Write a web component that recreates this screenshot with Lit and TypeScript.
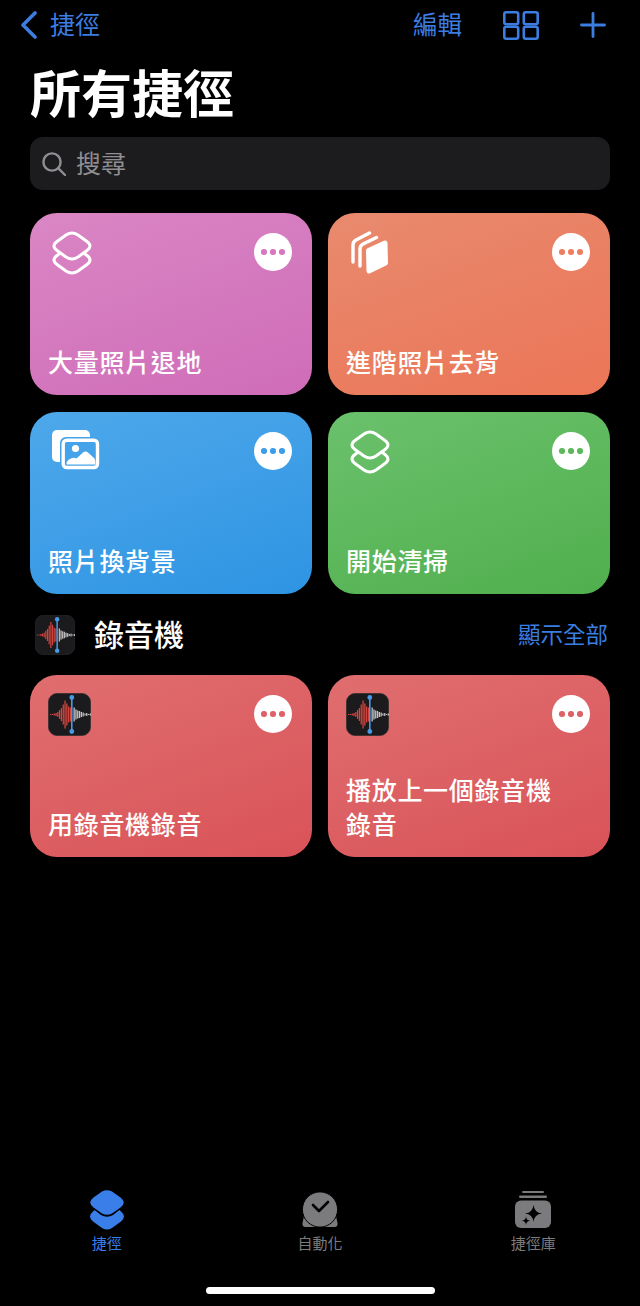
import { LitElement, html, svg, css, unsafeCSS } from 'lit';
import { customElement, property } from 'lit/decorators.js';

const FONT = unsafeCSS(`"Noto Sans CJK TC", "Noto Sans", sans-serif`);

// voice memo waveform, bar heights left to right
const RED_BARS = [1, 1, 2, 3, 5, 9, 13, 20, 28, 22, 16, 14];
const GREY_BARS = [14, 10, 8, 7, 5, 4, 2, 3, 1, 2];

const layersIcon = svg`
  <svg width="40" height="44" viewBox="0 0 40 44" fill="none" stroke="#fff" stroke-width="3" stroke-linejoin="round" stroke-linecap="round">
    <path d="M14 4Q20 0 26 4L35 10.5Q41 15 35 19.5L26 26Q20 30 14 26L5 19.5Q-1 15 5 10.5Z" />
    <path d="M7 23L5 24.5Q-1 29 5 33.5L14 40Q20 44 26 40L35 33.5Q41 29 35 24.5L33 23" />
  </svg>`;

const stackIcon = svg`
  <svg width="40" height="44" viewBox="0 0 40 44" fill="none" stroke="#fff" stroke-linecap="round" stroke-linejoin="round">
    <path d="M18.5 19.5L35 12L35.5 32L19 40Z" fill="#fff" stroke-width="5" />
    <path d="M26.5 6.5L13 13Q10 14.5 10 18V35" stroke-width="3.4" />
    <path d="M19.5 2L6 9Q3 10.5 3 14V31" stroke-width="3.4" />
  </svg>`;

const photosIcon = svg`
  <svg width="48" height="40" viewBox="0 0 48 40">
    <rect x="0" y="0" width="38" height="32" rx="5" fill="#fff" />
    <rect x="8" y="7" width="41" height="34" rx="6" fill="#45a3e9" />
    <rect x="11.2" y="10.2" width="34.3" height="27.3" rx="3.5" fill="#45a3e9" stroke="#fff" stroke-width="3.4" />
    <circle cx="23.5" cy="18.5" r="3.6" fill="#fff" />
    <path d="M14.5 34.5Q14 31 18 29Q22 27 24.5 28.5L31 22.5Q33.5 20.5 36 22.5L42.5 28.5Q43.5 30 43.5 34.5Z" fill="#fff" />
  </svg>`;

const voiceIcon = svg`
  <svg class="voice" viewBox="0 0 43 43">
    <rect x=".25" y=".25" width="42.5" height="42.5" rx="9" fill="#1b1b1e" stroke="#38383a" stroke-width=".5" />
    ${RED_BARS.map((h, i) => svg`<rect x=${2 + i * 1.8} y=${21.5 - h / 2} width="1.3" height=${h} fill="#d0453e" />`)}
    ${GREY_BARS.map((h, i) => svg`<rect x=${25.5 + i * 1.8} y=${21.5 - h / 2} width="1.3" height=${h} fill="#c4c4c4" />`)}
    <rect x="23" y="4" width="1.6" height="35" fill="#4a98e8" />
    <circle cx="23.8" cy="4.5" r="2.4" fill="#4a98e8" />
    <circle cx="23.8" cy="38.5" r="2.4" fill="#4a98e8" />
  </svg>`;

const ICONS = { layers: layersIcon, stack: stackIcon, photos: photosIcon, voice: voiceIcon };

@customElement('shortcut-card')
export class ShortcutCard extends LitElement {
  static styles = css`
    :host {
      display: block;
    }
    .card {
      height: 182px;
      box-sizing: border-box;
      padding: 18px 20px 17px 18px;
      border-radius: 27px;
      display: flex;
      flex-direction: column;
      justify-content: space-between;
      font-family: ${FONT};
    }
    .pink { --dot: #d877bf; background: linear-gradient(160deg, #da86c4, #cf6cb9); }
    .orange { --dot: #ec7f62; background: linear-gradient(160deg, #e88a6e, #ec7557); }
    .blue { --dot: #3e9de7; background: linear-gradient(160deg, #4ea8ea, #2e94e3); }
    .green { --dot: #5cb85b; background: linear-gradient(160deg, #6bc16c, #50af4d); }
    .red { --dot: #dd6166; background: linear-gradient(160deg, #e06e6f, #d95358); }
    .top {
      display: flex;
      justify-content: space-between;
      align-items: flex-start;
    }
    .icon {
      display: flex;
      margin-left: 4px;
    }
    .icon.voice-slot {
      margin-left: 0;
    }
    .voice {
      width: 43px;
      height: 43px;
      display: block;
    }
    .more {
      width: 38px;
      height: 38px;
      margin-top: 2px;
      border-radius: 50%;
      background: #fff;
      display: flex;
      align-items: center;
      justify-content: center;
      gap: 3.5px;
    }
    .more i {
      width: 5.5px;
      height: 5.5px;
      border-radius: 50%;
      background: var(--dot);
    }
    .label {
      max-width: 225px;
      color: #fff;
      font-size: 25px;
      font-weight: 500;
      line-height: 33.5px;
      letter-spacing: 0.7px;
    }
  `;

  @property() label = '';
  @property() tone = 'pink';
  @property() icon = 'layers';

  render() {
    return html`
      <div class="card ${this.tone}">
        <div class="top">
          <div class="icon ${this.icon === 'voice' ? 'voice-slot' : ''}">${ICONS[this.icon]}</div>
          <div class="more"><i></i><i></i><i></i></div>
        </div>
        <div class="label">${this.label}</div>
      </div>
    `;
  }
}

@customElement('app-root')
export class AppRoot extends LitElement {
  static styles = css`
    :host {
      display: flex;
      flex-direction: column;
      min-height: 1306px;
      background: #000;
      color: #fff;
      font-family: ${FONT};
    }
    .nav {
      height: 50px;
      padding: 0 34px 0 20px;
      display: flex;
      align-items: center;
      color: #3b7de0;
    }
    .back {
      display: flex;
      align-items: center;
      gap: 13px;
      font-size: 25px;
      line-height: 34px;
    }
    .back span {
      margin-bottom: 4px;
    }
    .actions {
      margin-left: auto;
      display: flex;
      align-items: center;
    }
    .edit {
      font-size: 24.5px;
      line-height: 34px;
      margin: 0 41px 2px 0;
    }
    .grid-btn {
      margin-right: 41px;
    }
    svg {
      display: block;
    }
    main {
      flex: 1;
      padding: 11px 30px 0;
    }
    h1 {
      margin: 0;
      font-size: 51px;
      font-weight: 700;
      line-height: 60px;
    }
    .search {
      margin-top: 16px;
      height: 53px;
      padding-left: 12px;
      border-radius: 13px;
      background: #1c1c1e;
      display: flex;
      align-items: center;
      gap: 10px;
      color: #8e8e93;
      font-size: 25px;
    }
    .search span {
      margin-bottom: 4px;
    }
    .cards {
      display: grid;
      grid-template-columns: 282px 282px;
      column-gap: 16px;
      row-gap: 17px;
      margin-top: 23px;
    }
    .cards.voice-row {
      margin-top: 0;
    }
    .section {
      display: flex;
      align-items: center;
      height: 40px;
      margin: 21px 2px 20px 5px;
    }
    .section .voice {
      width: 40px;
      height: 40px;
    }
    .section h2 {
      margin: 0 0 5px 19px;
      font-size: 30px;
      font-weight: 500;
      line-height: 40px;
    }
    .show-all {
      margin: 0 0 5px auto;
      color: #3b7de0;
      font-size: 22.5px;
    }
    .tabs {
      display: grid;
      grid-template-columns: repeat(3, 1fr);
    }
    .tab {
      display: flex;
      flex-direction: column;
      align-items: center;
      color: #7b7b7d;
      font-size: 15px;
      line-height: 22px;
      padding-bottom: 2px;
    }
    .tab.active {
      color: #3a7eea;
    }
    .tab-icon {
      height: 42px;
    }
    .clock {
      margin-top: 2px;
    }
    .home {
      width: 229px;
      height: 7px;
      margin: 31px auto 12px;
      border-radius: 4px;
      background: #fff;
    }
  `;

  render() {
    return html`
      <div class="nav">
        <div class="back">
          <svg width="17" height="28" viewBox="0 0 17 28" fill="none" stroke="#3b7de0" stroke-width="3.6" stroke-linecap="round" stroke-linejoin="round">
            <path d="M15 2L3 14L15 26" />
          </svg>
          <span>捷徑</span>
        </div>
        <div class="actions">
          <span class="edit">編輯</span>
          <svg class="grid-btn" width="36" height="29" viewBox="0 0 36 29" fill="none" stroke="#3b7de0" stroke-width="2.6">
            <rect x="1.3" y="1.3" width="13.9" height="11.9" rx="2" />
            <rect x="20.8" y="1.3" width="13.9" height="11.9" rx="2" />
            <rect x="1.3" y="15.8" width="13.9" height="11.9" rx="2" />
            <rect x="20.8" y="15.8" width="13.9" height="11.9" rx="2" />
          </svg>
          <svg width="26" height="26" viewBox="0 0 26 26" stroke="#3b7de0" stroke-width="2.8" stroke-linecap="round">
            <path d="M13 1.5V24.5M1.5 13H24.5" />
          </svg>
        </div>
      </div>
      <main>
        <h1>所有捷徑</h1>
        <div class="search">
          <svg width="24" height="24" viewBox="0 0 24 24" fill="none" stroke="#8e8e93" stroke-width="2.4" stroke-linecap="round">
            <circle cx="10" cy="10" r="8.6" />
            <path d="M16.4 16.4L23 23" />
          </svg>
          <span>搜尋</span>
        </div>
        <div class="cards">
          <shortcut-card label="大量照片退地" tone="pink" icon="layers"></shortcut-card>
          <shortcut-card label="進階照片去背" tone="orange" icon="stack"></shortcut-card>
          <shortcut-card label="照片換背景" tone="blue" icon="photos"></shortcut-card>
          <shortcut-card label="開始清掃" tone="green" icon="layers"></shortcut-card>
        </div>
        <div class="section">
          ${voiceIcon}
          <h2>錄音機</h2>
          <span class="show-all">顯示全部</span>
        </div>
        <div class="cards voice-row">
          <shortcut-card label="用錄音機錄音" tone="red" icon="voice"></shortcut-card>
          <shortcut-card label="播放上一個錄音機錄音" tone="red" icon="voice"></shortcut-card>
        </div>
      </main>
      <div class="tabs">
        <div class="tab active">
          <div class="tab-icon">
            <svg width="36" height="40" viewBox="0 0 36 40" fill="#3a7eea">
              <path d="M13 1.5Q18 -1 23 1.5L31.5 7.5Q38 12.5 31.5 17.5L23 23.5Q18 26 13 23.5L4.5 17.5Q-2 12.5 4.5 7.5Z" />
              <path d="M5.5 20L12 25Q18 28.5 24 25L30.5 20L32 21.5Q38 26.5 32 31.5L23 38Q18 41 13 38L4 31.5Q-2 26.5 4 21.5Z" />
            </svg>
          </div>
          捷徑
        </div>
        <div class="tab">
          <div class="tab-icon">
            <svg class="clock" width="36" height="36" viewBox="0 0 36 36">
              <path d="M2 24L0.5 31Q0 35 3.5 35H32.5Q36 35 35.5 31L34 24Z" fill="#7b7b7d" />
              <circle cx="18" cy="17.5" r="17.6" fill="#7b7b7d" stroke="#000" stroke-width="1" />
              <path d="M11 13L17 19L26 10" fill="none" stroke="#000" stroke-width="2.6" stroke-linecap="round" stroke-linejoin="round" />
            </svg>
          </div>
          自動化
        </div>
        <div class="tab">
          <div class="tab-icon">
            <svg width="36" height="39" viewBox="0 0 36 39" fill="#7b7b7d">
              <rect x="7" y="1" width="22" height="2" rx="1" />
              <rect x="4" y="5.5" width="28" height="2.4" rx="1.2" />
              <rect x="0" y="10.5" width="36" height="27.5" rx="6" />
              <path d="M18.5 15Q19.3 22.7 27 23.5Q19.3 24.3 18.5 32Q17.7 24.3 10 23.5Q17.7 22.7 18.5 15Z" fill="#000" />
              <path d="M11 26.5Q11.4 30.3 15 30.7Q11.4 31.1 11 35Q10.6 31.1 7 30.7Q10.6 30.3 11 26.5Z" fill="#000" />
            </svg>
          </div>
          捷徑庫
        </div>
      </div>
      <div class="home"></div>
    `;
  }
}
